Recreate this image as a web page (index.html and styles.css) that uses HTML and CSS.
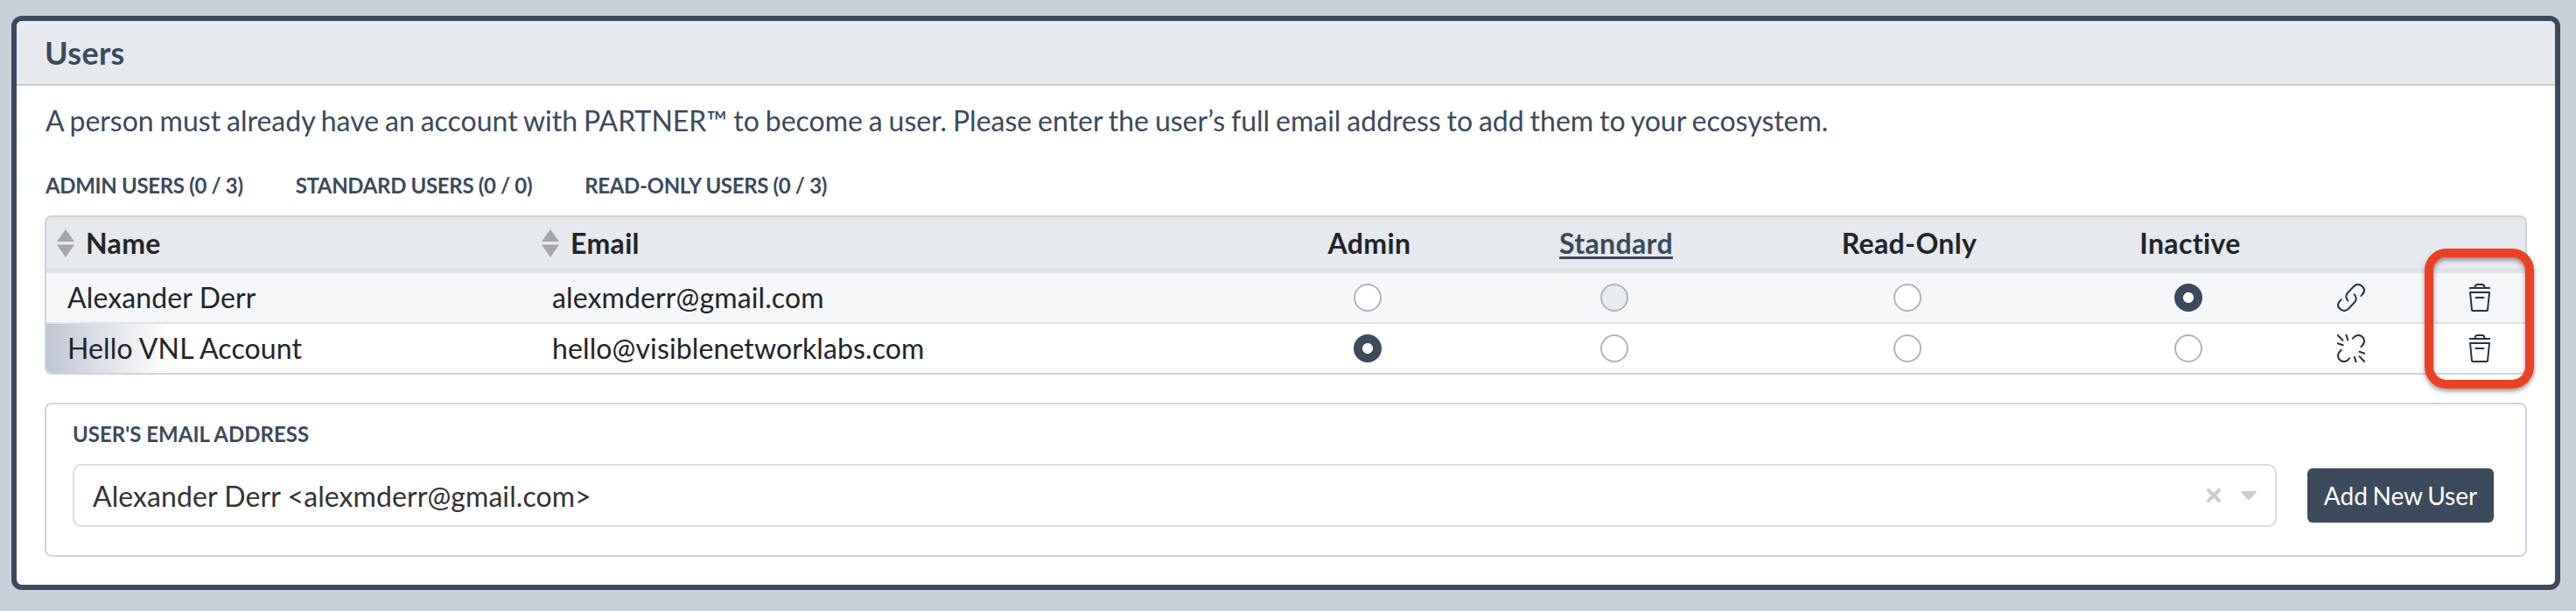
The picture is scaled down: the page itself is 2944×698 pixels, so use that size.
FILE: index.html
```html
<!DOCTYPE html>
<html lang="en">
<head>
    <meta charset="UTF-8">
    <meta name="viewport" content="width=device-width, initial-scale=1.0">
    <title>Users</title>
    <link rel="stylesheet" href="styles.css">
</head>
<body>
    <div class="panel">
        <div class="panel-header">
            <h2>Users</h2>
        </div>
        <div class="panel-body">
            <p class="intro">A person must already have an account with PARTNER™ to become a user. Please enter the user’s full email address to add them to your ecosystem.</p>

            <div class="counts">
                <span>ADMIN USERS (0 / 3)</span>
                <span>STANDARD USERS (0 / 0)</span>
                <span>READ-ONLY USERS (0 / 3)</span>
            </div>

            <div class="table-wrap">
                <table class="users-table">
                    <colgroup>
                        <col class="col-name">
                        <col class="col-email">
                        <col class="col-admin">
                        <col class="col-standard">
                        <col class="col-readonly">
                        <col class="col-inactive">
                        <col class="col-link">
                        <col class="col-delete">
                    </colgroup>
                    <thead>
                        <tr>
                            <th class="sortable"><div class="sort-label"><svg class="sort-icon" width="20" height="32" viewBox="0 0 20 32"><path d="M10 0L20 14H0zM0 17.5H20L10 32z"/></svg><span>Name</span></div></th>
                            <th class="sortable"><div class="sort-label"><svg class="sort-icon" width="20" height="32" viewBox="0 0 20 32"><path d="M10 0L20 14H0zM0 17.5H20L10 32z"/></svg><span>Email</span></div></th>
                            <th>Admin</th>
                            <th><a href="#" class="standard-link">Standard</a></th>
                            <th>Read-Only</th>
                            <th>Inactive</th>
                            <th></th>
                            <th></th>
                        </tr>
                    </thead>
                    <tbody>
                        <tr class="odd">
                            <td class="text">Alexander Derr</td>
                            <td class="text">alexmderr@gmail.com</td>
                            <td><input type="radio" name="role1" class="radio"></td>
                            <td><input type="radio" name="role1" class="radio" disabled></td>
                            <td><input type="radio" name="role1" class="radio"></td>
                            <td><input type="radio" name="role1" class="radio" checked></td>
                            <td>
                                <svg class="icon" width="32" height="32" viewBox="0 0 32 32">
                                    <path d="M27.4 14L29 12C31.6 9 31.6 5.8 28.8 3.2C25.8 .4 21.8 .4 19 3.2L12.4 10.2C9.8 13 9.8 16.6 12.4 19.6"/>
                                    <path d="M4.6 18L3 20C.4 23 .4 26.2 3.2 28.8C6.2 31.6 10.2 31.6 13 28.8L19.6 21.8C22.2 19 22.2 15.4 19.6 12.4"/>
                                </svg>
                            </td>
                            <td>
                                <svg class="icon" width="24" height="32" viewBox="0 0 24 32">
                                    <path d="M.3 5H23.7M6.6 5V4C6.6 2.2 8 1 9.6 1H14.4C16 1 17.4 2.2 17.4 4V5M1 10H23L21 30.2Q20.9 31 20 31H4Q3.1 31 3 30.2zM7.5 16H16.5"/>
                                </svg>
                            </td>
                        </tr>
                        <tr class="current">
                            <td class="text">Hello VNL Account</td>
                            <td class="text">hello@visiblenetworklabs.com</td>
                            <td><input type="radio" name="role2" class="radio" checked></td>
                            <td><input type="radio" name="role2" class="radio"></td>
                            <td><input type="radio" name="role2" class="radio"></td>
                            <td><input type="radio" name="role2" class="radio"></td>
                            <td>
                                <svg class="icon" width="32" height="32" viewBox="0 0 32 32">
                                    <path d="M17.8 4.8C21 .2 26 -.2 29 3C31.8 6 31.8 10 27.4 14.2"/>
                                    <path d="M14.2 27.2C11 31.8 6 32.2 3 29C.2 26 .2 22 4.6 17.8"/>
                                    <path d="M.8 1L6.4 6.8M10.4 .6L12.3 6.4M.6 10.3L6.6 12.2M25.4 19.8L31.4 21.7M19.7 25.6L21.6 31.4M25.6 25.2L31.2 31"/>
                                </svg>
                            </td>
                            <td>
                                <svg class="icon" width="24" height="32" viewBox="0 0 24 32">
                                    <path d="M.3 5H23.7M6.6 5V4C6.6 2.2 8 1 9.6 1H14.4C16 1 17.4 2.2 17.4 4V5M1 10H23L21 30.2Q20.9 31 20 31H4Q3.1 31 3 30.2zM7.5 16H16.5"/>
                                </svg>
                            </td>
                        </tr>
                    </tbody>
                </table>
                <div class="highlight"></div>
            </div>

            <div class="add-user">
                <label class="field-label">USER'S EMAIL ADDRESS</label>
                <div class="add-row">
                    <div class="select">
                        <span class="select-value">Alexander Derr &lt;alexmderr@gmail.com&gt;</span>
                        <svg class="select-clear" width="16" height="16" viewBox="0 0 16 16"><path d="M2 2L14 14M14 2L2 14"/></svg>
                        <svg class="select-arrow" width="18" height="10" viewBox="0 0 18 10"><path d="M1.5 0H16.5Q18.6 .4 17.3 2L10.6 9.2Q9 10.6 7.4 9.2L.7 2Q-.6 .4 1.5 0z"/></svg>
                    </div>
                    <button class="btn">Add New User</button>
                </div>
            </div>
        </div>
    </div>
</body>
</html>
```
FILE: styles.css
```css
* {
    margin: 0;
    padding: 0;
    box-sizing: border-box;
}

body {
    font-family: Lato, "Liberation Sans", sans-serif;
    font-size: 32px;
    letter-spacing: 0.12px;
    background: #c9d0da;
    color: #212529;
    padding: 18px 18px 24px 13px;
}

.panel {
    border: 6px solid #3b4a5c;
    border-radius: 12px;
    background: #fff;
    height: 656px;
    overflow: hidden;
}

.panel-header {
    height: 74px;
    padding: 0 32px;
    background: #e6e9ee;
    border-bottom: 2px solid #c8cdd2;
}

.panel-header h2 {
    font-size: 36px;
    line-height: 72px;
    letter-spacing: 0.3px;
    color: #3b4a5c;
}

.panel-body {
    padding: 16px 32px 32px;
}

.intro {
    line-height: 48px;
    letter-spacing: 0;
    word-spacing: -1.3px;
    color: #3b4a5c;
    margin-bottom: 32px;
    padding-left: 1px;
}

.counts {
    display: flex;
    gap: 60px;
    font-size: 24px;
    font-weight: bold;
    line-height: 36px;
    letter-spacing: -0.34px;
    color: #3b4a5c;
    margin-bottom: 16px;
    padding-left: 1px;
}

.table-wrap {
    position: relative;
    border: 2px solid #ced4da;
    border-radius: 8px;
}

.users-table {
    width: 100%;
    table-layout: fixed;
    border-collapse: separate;
    border-spacing: 0;
}

.col-name { width: 554px; }
.col-email { width: 779px; }
.col-admin { width: 354px; }
.col-standard { width: 210px; }
.col-readonly { width: 460px; }
.col-inactive { width: 182px; }
.col-link { width: 190px; }

.users-table th {
    height: 64px;
    padding-left: 4px;
    background: #e6e9ee;
    border-top: 2px solid #dee2e6;
    border-bottom: 6px solid #dee2e6;
    line-height: 56px;
    letter-spacing: 0.35px;
    text-align: center;
}

.users-table th:first-child {
    border-top-left-radius: 6px;
}

.users-table th:last-child {
    border-top-right-radius: 6px;
}

.users-table th.sortable {
    padding-left: 12px;
}

.sort-label {
    display: flex;
    align-items: center;
    gap: 13px;
}

.sort-icon {
    fill: #a4a6a9;
}

.standard-link {
    color: #3b4a5c;
    text-decoration-thickness: 3px;
    text-underline-offset: 3px;
    text-decoration-skip-ink: none;
}

.users-table td {
    height: 56px;
    line-height: 56px;
    text-align: center;
}

.users-table td.text {
    padding-left: 24px;
    text-align: left;
}

.users-table .odd td {
    height: 58px;
    background: #f5f7f9;
    border-bottom: 2px solid #dee2e6;
}

.current td:first-child {
    background: linear-gradient(to right, #c0c7d3, #fff 140px);
    border-bottom-left-radius: 6px;
}

.radio {
    display: block;
    appearance: none;
    width: 32px;
    height: 32px;
    margin: 0 auto;
    border: 2px solid #adb5bd;
    border-radius: 50%;
    background: #fff;
}

.radio:checked {
    border-color: #3b4a5c;
    background: radial-gradient(circle, #fff 5.6px, #3b4a5c 6.4px);
}

.radio:disabled {
    background: #e9ecef;
}

.icon {
    display: block;
    margin: 0 auto;
    fill: none;
    stroke: #263445;
    stroke-width: 2;
    stroke-linecap: round;
    stroke-linejoin: round;
}

.highlight {
    position: absolute;
    top: 36px;
    right: -10px;
    width: 125px;
    height: 160px;
    border: 10px solid #eb4026;
    border-radius: 25px;
    box-shadow: 0 3px 5px rgba(0, 0, 0, 0.4), inset 0 3px 5px rgba(0, 0, 0, 0.4);
}

.add-user {
    margin-top: 32px;
    padding: 16px 36px 32px 30px;
    border: 2px solid #ced4da;
    border-radius: 8px;
}

.field-label {
    display: block;
    font-size: 24px;
    font-weight: bold;
    line-height: 36px;
    letter-spacing: 0;
    color: #3b4a5c;
    margin-bottom: 16px;
}

.add-row {
    display: flex;
    align-items: center;
    gap: 35px;
}

.select {
    flex: 1;
    display: flex;
    align-items: center;
    height: 72px;
    padding: 0 21px;
    border: 2px solid #dcdcdc;
    border-radius: 10px;
    color: #333;
}

.select-value {
    flex: 1;
    letter-spacing: 0.08px;
}

.select-clear {
    margin-right: 23px;
    stroke: #ccc;
    stroke-width: 4;
    stroke-linecap: round;
}

.select-arrow {
    fill: #ccc;
}

.btn {
    width: 213px;
    height: 62px;
    border: none;
    border-radius: 6px;
    background: #3b4a5c;
    color: #fff;
    font-family: inherit;
    font-size: 28px;
    word-spacing: -1.5px;
}
```
